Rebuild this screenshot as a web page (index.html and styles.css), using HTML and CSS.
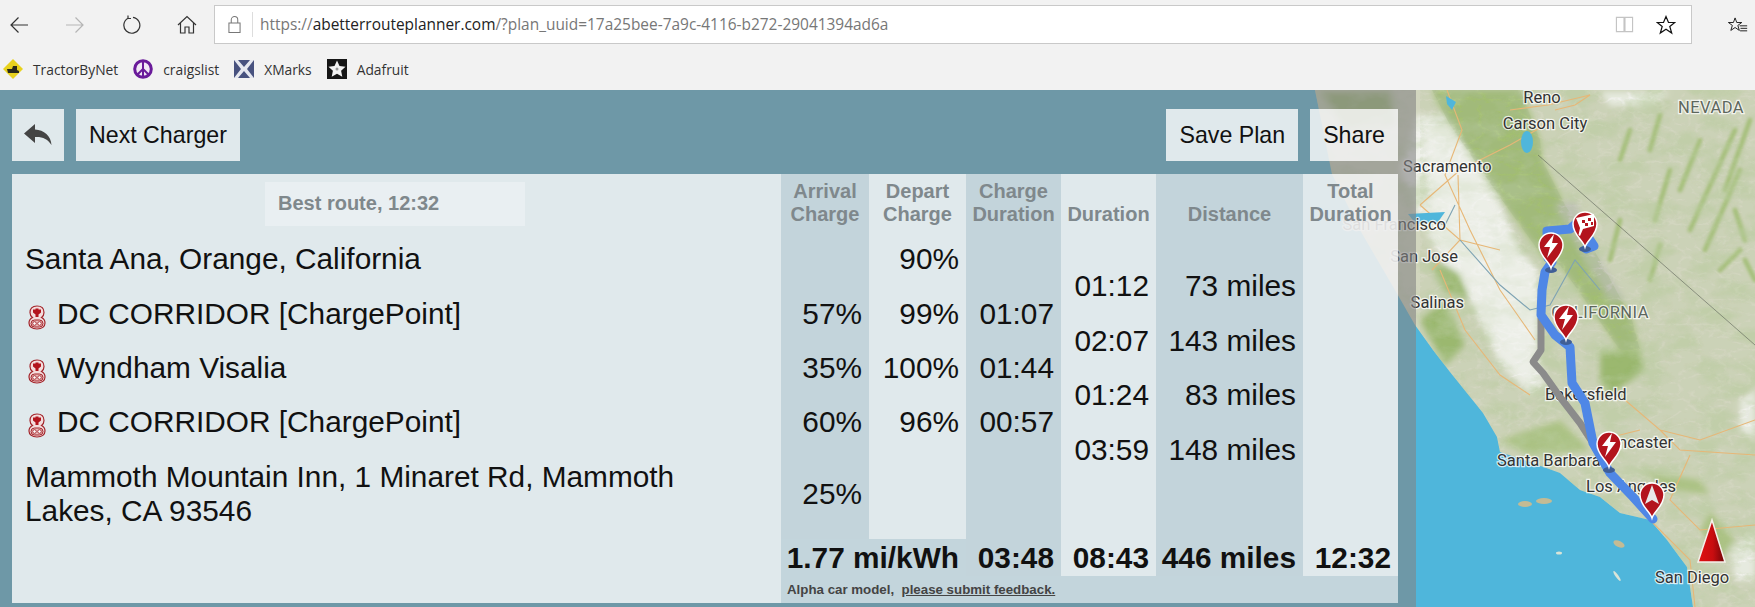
FILE: index.html
```html
<!DOCTYPE html>
<html lang="en">
<head>
  <meta charset="UTF-8">
  <title>A Better Route Planner</title>
  <link rel="stylesheet" href="styles.css">
</head>
<body>
  <div class="browser">
    <div class="toolbar">
      <div class="nav">
        <svg class="nav-icon" viewBox="0 0 20 20"><path d="M19 10H2M9.500 2.500L2 10l7.500 7.500"/></svg>
        <svg class="nav-icon off" viewBox="0 0 20 20"><path d="M1 10h17M10.500 2.500L18 10l-7.500 7.500"/></svg>
        <svg class="nav-icon" viewBox="0 0 20 20"><path d="M7 3.200A8 8 0 1 0 12 2.300M7 0.500V3.500H10"/></svg>
        <svg class="nav-icon" viewBox="0 0 20 20"><path d="M1 10L10 1.500 19 10M3.500 8V18H8V12H12V18H16.500V8"/></svg>
      </div>
      <div class="address">
        <svg class="lock" viewBox="0 0 14 20"><path d="M1 8.500H13V18.500H1ZM3.500 8.500V5A3.500 3.500 0 0 1 10.500 5V8.500"/></svg>
        <div class="url">https://<b>abetterrouteplanner.com</b>/?plan_uuid=17a25bee-7a9c-4116-b272-29041394ad6a</div>
        <svg class="book" viewBox="0 0 20 20"><path d="M1.500 2.500H9.500V17.500H1.500ZM10.500 2.500H18.500V17.500H10.500Z"/></svg>
        <svg class="star" viewBox="0 0 20 20"><path d="M10 1.500l2.500 6h6.300l-5 4 1.900 6.500L10 14.300 4.300 18l1.900-6.500-5-4h6.300Z"/></svg>
      </div>
      <svg class="hub" viewBox="0 0 24 20"><path d="M8.500 1.500l2 5.500h6l-4.700 3.500 1.800 6L8.500 13 3.400 16.500l1.800-6L.5 7h6ZM14 11h9M15 14h8M14.500 17h8.500"/></svg>
    </div>
    <div class="bookmarks">
      <div class="bookmark">
        <svg viewBox="0 0 20 20"><path fill="#e8d21e" d="M10 0l10 10-10 10L0 10Z"/><path fill="#2a2a1a" d="M4 10h5l1-3h4v4l2 1v2H5Z"/></svg>
        TractorByNet
      </div>
      <div class="bookmark">
        <svg viewBox="0 0 20 20"><circle cx="10" cy="10" r="8.300" fill="#f2e9f5" stroke="#6a1b9a" stroke-width="3"/><path fill="none" stroke="#6a1b9a" stroke-width="2" d="M10 2v16M10 10l-5.500 5.500M10 10l5.500 5.500"/></svg>
        craigslist
      </div>
      <div class="bookmark">
        <svg viewBox="0 0 20 20"><path fill="#48527f" d="M0 1h20v18H0Z"/><path fill="#e6e8f0" d="M0 1l4 0 6 7 6-7 4 0-7 9 7 9-4 0-6-7-6 7-4 0 7-9Z"/></svg>
        XMarks
      </div>
      <div class="bookmark">
        <svg viewBox="0 0 20 20"><path fill="#161616" d="M0 0h20v20H0Z"/><path fill="#f4f4f4" d="M10 1.500l2.500 5.500 6 .7-4.400 4 1.200 6L10 14.700 4.700 17.700l1.200-6-4.400-4 6-.7Z"/><circle cx="10" cy="10" r="1.500" fill="#999"/></svg>
        Adafruit
      </div>
    </div>
  </div>

  <div class="main">
    <svg class="map" viewBox="0 90 1755 517" width="1755" height="517">
      <defs>
        <filter id="soft" x="-5%" y="-5%" width="110%" height="110%"><feGaussianBlur stdDeviation="3"/></filter>
        <filter id="soft-streak" x="-10%" y="-10%" width="120%" height="120%"><feGaussianBlur stdDeviation="1.600"/></filter>
        <filter id="terrain" x="0" y="0" width="100%" height="100%">
          <feTurbulence type="fractalNoise" baseFrequency="0.03 0.05" numOctaves="5" seed="8"/>
          <feColorMatrix values="0 0 0 0 0.50  0 0 0 0 0.62  0 0 0 0 0.36  3.200 0 0 0 -1.350"/>
        </filter>
        <filter id="ridges" x="0" y="0" width="100%" height="100%">
          <feTurbulence type="turbulence" baseFrequency="0.05 0.08" numOctaves="3" seed="3"/>
          <feColorMatrix values="0 0 0 0 0.36  0 0 0 0 0.46  0 0 0 0 0.24  0 6 0 0 -0.400"/>
        </filter>
        <clipPath id="land-clip">
          <path d="M1315 90L1332 174 1360 230 1395 290 1415 325 1433 350 1450 372 1483 413 1497 437 1500 452 1530 462 1560 473 1580 490 1600 497 1620 513 1650 520 1667 540 1687 567 1693 607H1755V90Z"/>
        </clipPath>
        <clipPath id="sierra-clip">
          <path d="M1432 90L1520 90 1540 140 1542 160 1565 205 1600 260 1632 320 1640 350 1620 350 1585 300 1560 265 1545 260 1495 190 1450 125Z"/>
        </clipPath>
        <linearGradient id="arrow-fill" x1="0" x2="1" y1="0" y2="0">
          <stop offset="0" stop-color="#e01010"/>
          <stop offset="0.550" stop-color="#c80d10"/>
          <stop offset="1" stop-color="#6e0508"/>
        </linearGradient>
        <g id="pin">
          <path fill="#b3141d" stroke="#fff" stroke-width="1.500" d="M0 0C-2 -7 -12 -12 -12 -23A12 12 0 0 1 12 -23C12 -12 2 -7 0 0Z"/>
        </g>
        <path id="bolt" fill="#fff" d="M3 -34L-7 -21H-1L-4 -10 7 -25H1Z"/>
      </defs>

      <rect x="0" y="90" width="1755" height="517" fill="#4fb6db"/>

      <g clip-path="url(#land-clip)">
        <rect x="1300" y="90" width="455" height="517" fill="#d2d6bf"/>
        <g filter="url(#soft)">
          <path fill="#f1f2ed" d="M1417 115L1450 115 1490 180 1520 250 1538 270 1538 350 1545 385 1530 395 1500 365 1470 300 1430 240 1400 170Z"/>
          <path fill="#f1f2ed" d="M1600 92h70l-20 14h-40ZM1740 400l15 -10v50l-15 -10ZM1730 550l25 -20v50l-20 0Z"/>
          <path fill="#a3bf72" d="M1432 90L1520 90 1540 140 1542 160 1565 205 1600 260 1632 320 1640 350 1620 350 1585 300 1560 265 1545 260 1495 190 1450 125Z"/>
          <path fill="#9ab86d" d="M1600 350L1640 350 1645 370 1610 395 1600 380ZM1320 92L1390 92 1395 125 1345 130ZM1420 320L1445 300 1465 345 1445 365ZM1430 262L1462 272 1470 300 1445 292Z"/>
          <path fill="#adc485" d="M1640 470L1700 480 1710 495 1670 490ZM1500 440L1560 420 1590 450 1530 455ZM1710 510L1735 540 1720 560 1700 530Z"/>
          <path fill="#c2c5b8" d="M1555 205L1575 200 1600 260 1625 300 1610 300 1585 260Z"/>
        </g>
        <g fill="none" stroke="#9dbc6c" stroke-width="5" stroke-linecap="round" opacity="0.800" filter="url(#soft-streak)">
          <path d="M1700 140L1680 190M1735 130L1690 230M1750 120L1725 190M1740 170L1705 250M1660 115L1650 150M1670 170L1655 220M1630 130L1620 160"/>
          <path d="M1735 210L1745 240M1745 260L1755 280M1620 220L1610 260M1660 245L1650 280M1720 270L1740 250"/>
        </g>
        <rect x="1300" y="90" width="455" height="517" filter="url(#terrain)" opacity="0.550"/>
        <rect x="1420" y="90" width="335" height="517" filter="url(#ridges)" opacity="0.130"/>
        <g clip-path="url(#sierra-clip)">
          <rect x="1420" y="90" width="240" height="270" filter="url(#ridges)" opacity="0.350"/>
        </g>
        <path fill="#f1f2ed" opacity="0.600" filter="url(#soft)" d="M1425 125L1450 125 1490 190 1520 255 1535 272 1535 345 1530 385 1500 355 1470 295 1435 240Z"/>
      </g>

      <g fill="none" stroke="#e7b777" stroke-width="1.100">
        <path d="M1447 90L1462 130 1445 175 1470 230 1500 290 1535 340M1545 125L1510 145 1460 170 1420 205M1548 105L1510 110M1548 105L1590 95 1575 105 1555 110M1458 175L1460 240 1432 270M1420 205L1460 240 1500 250M1440 270L1465 330 1500 375 1530 395M1625 400L1660 430 1700 440 1755 420M1600 440L1640 430M1660 430L1680 450 1755 455M1690 455L1670 500 1700 530 1755 525M1640 510L1690 560 1695 607"/>
      </g>
      <g fill="none" stroke="#7ea3b3" stroke-width="1.100">
        <path d="M1460 240L1500 285 1530 310 1550 305 1575 260 1600 290M1455 205L1445 225 1420 217"/>
      </g>
      <path fill="none" stroke="#555a50" stroke-width="0.800" opacity="0.700" d="M1538 155L1755 345"/>

      <g fill="#4fb6db">
        <ellipse cx="1527" cy="142" rx="6" ry="11"/>
        <path d="M1446 96l10 6 -4 8 -5 -6Z"/>
        <path d="M1408 214L1445 212 1438 222 1416 224Z"/>
      </g>
      <g fill="#c4bb94">
        <ellipse cx="1525" cy="504" rx="7" ry="3"/>
        <ellipse cx="1544" cy="501" rx="8" ry="3"/>
        <ellipse cx="1619" cy="544" rx="6" ry="3" transform="rotate(25 1619 544)"/>
        <ellipse cx="1559" cy="553" rx="3" ry="1.500" fill="#d8e4d8"/>
        <ellipse cx="1617" cy="576" rx="6" ry="1.500" fill="#d8e4d8" transform="rotate(55 1617 576)"/>
      </g>

      <g class="map-labels">
        <text x="1542" y="103" text-anchor="middle">Reno</text>
        <text x="1545" y="129" text-anchor="middle">Carson City</text>
        <text x="1711" y="113" text-anchor="middle" class="state">NEVADA</text>
        <text x="1403" y="172">Sacramento</text>
        <text x="1446" y="230" text-anchor="end">San Francisco</text>
        <text x="1458" y="262" text-anchor="end">San Jose</text>
        <text x="1464" y="308" text-anchor="end">Salinas</text>
        <text x="1649" y="318" text-anchor="end" class="state">CALIFORNIA</text>
        <text x="1545" y="400">Bakersfield</text>
        <text x="1673" y="448" text-anchor="end">Lancaster</text>
        <text x="1497" y="466">Santa Barbara</text>
        <text x="1586" y="492">Los Angeles</text>
        <text x="1655" y="583">San Diego</text>
      </g>

      <path class="route-gray" d="M1541 318V350L1533 362 1543 373 1560 397 1580 423 1593 443"/>
      <path class="route" d="M1552 262L1545 272 1542 290 1541 315 1555 335 1570 347 1572 383 1585 403 1593 443 1610 473 1633 497 1653 519"/>
      <path class="route" d="M1548 258L1547 231 1570 229 1578 222 1590 240 1594 246 1586 249"/>
      <g fill="#3f5e96">
        <ellipse cx="1551" cy="270" rx="6" ry="3"/>
        <ellipse cx="1585" cy="249" rx="6" ry="3"/>
        <ellipse cx="1566" cy="342" rx="6" ry="3"/>
        <ellipse cx="1609" cy="470" rx="6" ry="3"/>
      </g>

      <g transform="translate(1551 268)"><use href="#pin"/><use href="#bolt"/></g>
      <g transform="translate(1585 247)">
        <use href="#pin"/>
        <path fill="#fff" d="M-9 -29L9 -33V-21L-2 -18 -5 -11 -6.500 -12 -5 -19Z"/>
        <path fill="#b3141d" d="M-3 -27h3v3h-3ZM3 -29h3v3h-3ZM0 -24h3v3h-3ZM6 -25h2v3h-2Z"/>
      </g>
      <g transform="translate(1566 340)"><use href="#pin"/><use href="#bolt"/></g>
      <g transform="translate(1609 467)"><use href="#pin"/><use href="#bolt"/></g>
      <g transform="translate(1652 518)">
        <use href="#pin"/>
        <path fill="#e8e8e8" d="M0 -33L7 -14 0 -18 -7 -14Z"/>
      </g>
      <path fill="url(#arrow-fill)" stroke="#f5f0ea" stroke-width="1.500" d="M1712 520L1698 562 1725 562Z"/>
    </svg>

    <div class="panel">
      <div class="actions">
        <button class="btn btn-icon">
          <svg viewBox="0 0 28 22"><path d="M11 0L0 9.500 11 19V13C18 12.500 24 15 27.500 21 27 12 20 6 11 5.500Z"/></svg>
        </button>
        <button class="btn">Next Charger</button>
        <button class="btn btn-save">Save Plan</button>
        <button class="btn">Share</button>
      </div>

      <table class="plan">
        <colgroup>
          <col class="col-stop">
          <col class="col-dark col-arrive">
          <col class="col-light col-depart">
          <col class="col-dark col-charge">
          <col class="col-light col-charge">
          <col class="col-dark col-dist">
          <col class="col-light col-charge">
        </colgroup>
        <thead>
          <tr class="head-row">
            <th class="stop"><div class="best">Best route, 12:32</div></th>
            <th>Arrival<br>Charge</th>
            <th>Depart<br>Charge</th>
            <th>Charge<br>Duration</th>
            <th>Duration</th>
            <th>Distance</th>
            <th>Total<br>Duration</th>
          </tr>
        </thead>
        <tbody>
          <tr class="half">
            <td class="stop" rowspan="2">Santa Ana, Orange, California</td>
            <td rowspan="2"></td>
            <td rowspan="2">90%</td>
            <td rowspan="2"></td>
            <td></td>
            <td></td>
            <td rowspan="11"></td>
          </tr>
          <tr class="half">
            <td rowspan="2">01:12</td>
            <td rowspan="2">73 miles</td>
          </tr>
          <tr class="half">
            <td class="stop" rowspan="2"><svg class="plug"><use href="#plug-icon"/></svg>DC CORRIDOR [ChargePoint]</td>
            <td rowspan="2">57%</td>
            <td rowspan="2">99%</td>
            <td rowspan="2">01:07</td>
          </tr>
          <tr class="half">
            <td rowspan="2">02:07</td>
            <td rowspan="2">143 miles</td>
          </tr>
          <tr class="half">
            <td class="stop" rowspan="2"><svg class="plug"><use href="#plug-icon"/></svg>Wyndham Visalia</td>
            <td rowspan="2">35%</td>
            <td rowspan="2">100%</td>
            <td rowspan="2">01:44</td>
          </tr>
          <tr class="half">
            <td rowspan="2">01:24</td>
            <td rowspan="2">83 miles</td>
          </tr>
          <tr class="half">
            <td class="stop" rowspan="2"><svg class="plug"><use href="#plug-icon"/></svg>DC CORRIDOR [ChargePoint]</td>
            <td rowspan="2">60%</td>
            <td rowspan="2">96%</td>
            <td rowspan="2">00:57</td>
          </tr>
          <tr class="half">
            <td rowspan="2">03:59</td>
            <td rowspan="2">148 miles</td>
          </tr>
          <tr class="half">
            <td class="stop" rowspan="3">Mammoth Mountain Inn, 1 Minaret Rd, Mammoth Lakes, CA 93546</td>
            <td rowspan="3">25%</td>
            <td rowspan="3"></td>
            <td rowspan="3"></td>
          </tr>
          <tr class="half">
            <td rowspan="2"></td>
            <td rowspan="2"></td>
          </tr>
          <tr class="tail"></tr>
          <tr class="totals">
            <td class="stop" rowspan="2"></td>
            <td class="band" colspan="2">1.77 mi/kWh</td>
            <td>03:48</td>
            <td>08:43</td>
            <td>446 miles</td>
            <td>12:32</td>
          </tr>
          <tr class="note-row">
            <td class="note" colspan="6">Alpha car model,&nbsp; <a href="#">please submit feedback.</a></td>
          </tr>
        </tbody>
      </table>
    </div>
  </div>

  <svg class="defs-only" width="0" height="0">
    <defs>
      <g id="plug-icon">
        <path fill="#f3dcdc" stroke="#a3242a" stroke-width="1.200" d="M9 1C14 1 16 4 16 7.500 16 10 15 11.500 13.500 12.500 15.500 13.500 17 15.500 17 18 17 21.500 14 24 9 24 4 24 1 21.500 1 18 1 15.500 2.500 13.500 4.500 12.500 3 11.500 2 10 2 7.500 2 4 4 1 9 1Z"/>
        <path fill="#b3141d" d="M5 4.500H7.500V3.500H10.500V4.500H13V7.500L10.500 9.500V12H7.500V9.500L5 7.500Z"/>
        <rect x="3" y="15" width="12" height="7" rx="3.500" fill="#e9b9b9" stroke="#a3242a"/>
        <circle cx="6.500" cy="18.500" r="1.800" fill="#fff" stroke="#a3242a" stroke-width="0.900"/>
        <circle cx="11.500" cy="18.500" r="1.800" fill="#fff" stroke="#a3242a" stroke-width="0.900"/>
      </g>
    </defs>
  </svg>
</body>
</html>
```

FILE: styles.css
```css
* {
  box-sizing: border-box;
}
html, body {
  margin: 0;
  height: 100%;
  overflow: hidden;
}
body {
  font-family: "Liberation Sans", Arial, sans-serif;
  background: #f2f2f2;
}

/* browser chrome */
.browser {
  height: 90px;
  background: #f2f2f2;
  font-family: "Open Sans", "Noto Sans", sans-serif;
}
.toolbar {
  height: 50px;
  display: flex;
  align-items: flex-start;
  padding-top: 5px;
}
.nav {
  width: 214px;
  height: 39px;
  display: flex;
  align-items: center;
  gap: 36px;
  padding-left: 9px;
}
.nav-icon {
  width: 20px;
  height: 20px;
  fill: none;
  stroke: #333;
  stroke-width: 1.200;
  flex-shrink: 0;
}
.nav-icon.off {
  stroke: #b5b5b5;
}
.address {
  width: 1478px;
  height: 39px;
  background: #fff;
  border: 1px solid #c9c9c9;
  display: flex;
  align-items: center;
  padding-left: 13px;
}
.lock {
  width: 13px;
  height: 19px;
  fill: none;
  stroke: #777;
  stroke-width: 1.100;
  flex-shrink: 0;
}
.url {
  margin-left: 11px;
  border-left: 1px solid #ddd;
  padding-left: 7px;
  line-height: 25px;
  font-size: 15.450px;
  color: #777;
  flex: 1;
  white-space: nowrap;
}
.url b {
  font-weight: 400;
  color: #222;
}
.book {
  width: 19px;
  height: 19px;
  fill: none;
  stroke: #c4c4c4;
  stroke-width: 1.200;
  margin-right: 22px;
}
.star {
  width: 20px;
  height: 20px;
  fill: none;
  stroke: #111;
  stroke-width: 1.200;
  margin-right: 15px;
}
.hub {
  width: 20px;
  height: 20px;
  margin: 10px 0 0 36px;
  fill: none;
  stroke: #111;
  stroke-width: 1.100;
}
.bookmarks {
  height: 40px;
  display: flex;
  align-items: center;
  padding: 0 0 2px 3px;
}
.bookmark {
  display: flex;
  align-items: center;
  gap: 10px;
  font-size: 13.800px;
  color: #333;
  margin-right: 15px;
}
.bookmark svg {
  width: 20px;
  height: 20px;
}

/* planner */
.main {
  position: relative;
  height: 517px;
  overflow: hidden;
  background: #4fb6db;
}
.map {
  position: absolute;
  left: 0;
  top: 0;
}
.map-labels text {
  font-family: Roboto, "Liberation Sans", sans-serif;
  font-size: 16.500px;
  fill: #333;
  stroke: rgba(255, 255, 255, 0.75);
  stroke-width: 2.500px;
  paint-order: stroke;
}
.map-labels .state {
  fill: #5d675d;
  letter-spacing: 0.5px;
}
.route {
  fill: none;
  stroke: #4f87e6;
  stroke-width: 9;
  stroke-linejoin: round;
  stroke-linecap: round;
}
.route-gray {
  fill: none;
  stroke: #8b8b8b;
  stroke-width: 7;
  stroke-linejoin: round;
}
.panel {
  position: relative;
  width: 1416px;
  height: 517px;
  background: rgba(132, 132, 132, 0.6);
  padding: 19px 18px 0 12px;
}
.actions {
  display: flex;
  gap: 12px;
  height: 52px;
  margin-bottom: 13px;
}
.btn {
  border: 0;
  padding: 0 13px;
  background: rgba(255, 255, 255, 0.79);
  font-family: inherit;
  font-size: 23.200px;
  color: #111;
}
.btn-icon {
  width: 52px;
  padding: 0;
  display: flex;
  align-items: center;
  justify-content: center;
}
.btn-icon svg {
  width: 28px;
  height: 22px;
  fill: #444;
}
.btn-save {
  margin-left: auto;
}

.plan {
  width: 1386px;
  table-layout: fixed;
  border-collapse: collapse;
  border-spacing: 0;
  font-size: 29.800px;
  line-height: 34px;
  color: #111;
}
.col-stop {
  width: 769px;
  background: rgba(255, 255, 255, 0.79);
}
.col-arrive {
  width: 88px;
}
.col-depart {
  width: 97px;
}
.col-charge {
  width: 95px;
}
.col-dist {
  width: 147px;
}
.col-dark {
  background: rgba(255, 255, 255, 0.59);
}
.col-light {
  background: rgba(255, 255, 255, 0.79);
}
.plan th {
  font-size: 20px;
  line-height: 23px;
  color: #7f888c;
  padding: 6px 0 0;
  vertical-align: top;
  font-weight: 700;
}
.plan th:nth-child(5), .plan th:nth-child(6) {
  padding-top: 29px;
}
.head-row {
  height: 58px;
}
.plan th.stop {
  padding-top: 8px;
}
.best {
  width: 260px;
  height: 44px;
  margin: 0 0 0 253px;
  padding-left: 13px;
  background: rgba(255, 255, 255, 0.3);
  line-height: 42px;
  text-align: left;
}
.half {
  height: 27.200px;
}
.tail {
  height: 35.400px;
}
.plan td {
  padding: 0 7px 0 0;
  text-align: right;
  vertical-align: middle;
  white-space: nowrap;
}
.plan td.stop {
  padding: 0 60px 0 13px;
  text-align: left;
  white-space: normal;
}
.plug {
  width: 18px;
  height: 25px;
  margin: 0 11px 0 3px;
  vertical-align: -6px;
}
.totals {
  height: 37px;
  font-weight: 700;
}
.plan td.band {
  background: #c3d5dc;
}
.note-row {
  height: 27px;
}
.plan td.note {
  background: #c3d5dc;
  font-size: 13.300px;
  line-height: 18px;
  font-weight: 700;
  color: #444;
  text-align: left;
  padding-left: 6px;
}
.note a {
  color: #444;
}
.defs-only {
  position: absolute;
}
```
